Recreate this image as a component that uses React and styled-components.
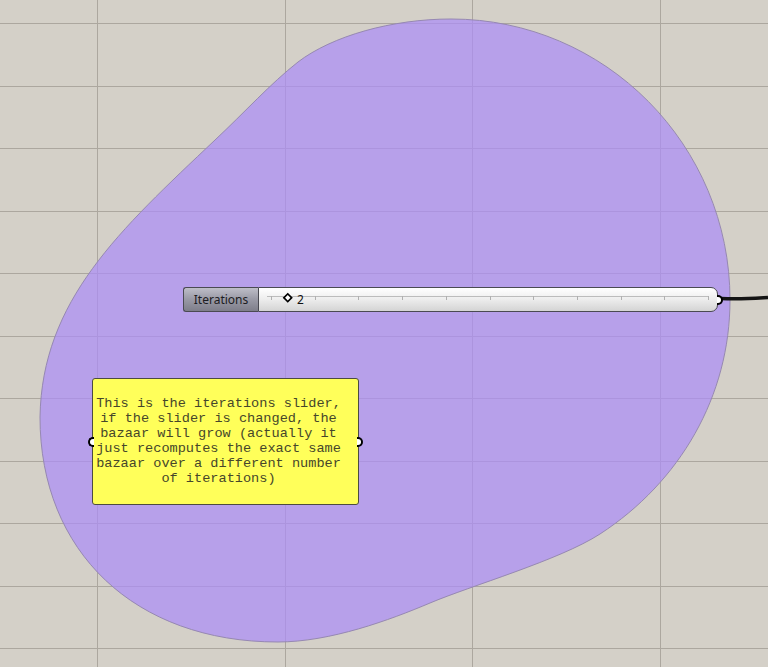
import React from "react";
import styled, { createGlobalStyle } from "styled-components";

const GlobalStyle = createGlobalStyle`
  html, body {
    margin: 0;
    padding: 0;
    background: #d4d0c8;
  }
`;

// outline of the purple group, one cubic per stretch, clockwise from the top
const groupOutline = [
  "M451,19",
  "C605,19 730,145 730,300",
  "C730,396 680,482 600,534",
  "C560,560 470,586 430,603",
  "C390,620 330,642 278,642",
  "C135,642 40,552 40,417",
  "C42,300 120,230 215,140",
  "C245,112 270,84 298,62",
  "C332,36 392,19 451,19",
  "Z",
].join(" ");

const verticalLines = [-90.5, 97, 284.5, 472, 659.5].map((x) => Math.round(x) + 0.5);
const horizontalLines = Array.from({ length: 11 }, (_, k) => Math.round(23 + 62.5 * k) + 0.5);
const ticks = Array.from({ length: 11 }, (_, k) => Math.round(12 + 43.7 * k) + 0.5);

const noteText = [
  "This is the iterations slider,",
  "if the slider is changed, the",
  "bazaar will grow (actually it",
  "just recomputes the exact same",
  "bazaar over a different number",
  "of iterations)",
];

const App = () => {
  return (
    <>
      <GlobalStyle />
      <Canvas>
        <Layer width="768" height="667" viewBox="0 0 768 667">
          {verticalLines.map((x) => (
            <line key={`v${x}`} x1={x} y1="0" x2={x} y2="667" stroke="#aca79f" shapeRendering="crispEdges" />
          ))}
          {horizontalLines.map((y) => (
            <line key={`h${y}`} x1="0" y1={y} x2="768" y2={y} stroke="#aca79f" shapeRendering="crispEdges" />
          ))}
          <path d={groupOutline} fill="rgba(172, 142, 246, 0.72)" stroke="#9688b2" strokeWidth="1" />
          {/* wire leaving the slider output */}
          <path d="M721,298.5 C740,299.5 752,298.5 768,297.5" stroke="#141414" strokeWidth="3.6" fill="none" />
        </Layer>

        <Slider>
          <SliderLabel>Iterations</SliderLabel>
          <SliderTrack>
            <Rail width="460" height="22" viewBox="0 0 460 22">
              <line x1="8" y1="8.5" x2="450" y2="8.5" stroke="#bcbcbc" />
              {ticks.map((x) => (
                <line key={x} x1={x} y1="8" x2={x} y2="12" stroke="#b0b0b0" />
              ))}
              <rect
                x="26"
                y="7"
                width="5.5"
                height="5.5"
                transform="rotate(45 28.75 9.75)"
                fill="#fff"
                stroke="#000"
                strokeWidth="1.7"
              />
            </Rail>
            <SliderValue>2</SliderValue>
          </SliderTrack>
          <Grip $side="right" />
        </Slider>

        <Note>
          <Grip $side="left" />
          {noteText.map((line) => (
            <NoteLine key={line}>{line}</NoteLine>
          ))}
          <Grip $side="right" />
        </Note>
      </Canvas>
    </>
  );
};

const Canvas = styled.div`
  position: relative;
  width: 768px;
  height: 667px;
  overflow: hidden;
  background: #d4d0c8;
`;

const Layer = styled.svg`
  position: absolute;
  left: 0;
  top: 0;
  display: block;
`;

const Slider = styled.div`
  position: absolute;
  left: 183px;
  top: 287px;
  width: 535px;
  height: 25px;
  display: flex;
  box-sizing: border-box;
`;

const SliderLabel = styled.div`
  width: 75px;
  box-sizing: border-box;
  display: flex;
  align-items: center;
  justify-content: center;
  padding-bottom: 1px;
  border: 1px solid #4a4a52;
  border-right: none;
  border-radius: 3px 0 0 3px;
  background: linear-gradient(to bottom, #bebec8 0%, #9c9ca8 45%, #7e7e8a 100%);
  font-family: "Noto Sans", "Open Sans", sans-serif;
  font-size: 12px;
  color: #1c1c22;
`;

const SliderTrack = styled.div`
  position: relative;
  flex: 1;
  box-sizing: border-box;
  border: 1px solid #4a4a52;
  border-radius: 0 7px 7px 0;
  background: linear-gradient(to bottom, #ffffff 0%, #efefef 45%, #d4d4d4 100%);
  display: flex;
  align-items: center;
`;

const Rail = styled.svg`
  position: absolute;
  left: 0;
  top: 0;
  display: block;
`;

const SliderValue = styled.span`
  position: relative;
  margin-left: 38px;
  margin-top: -1px;
  font-family: "Noto Sans", "Open Sans", sans-serif;
  font-size: 12px;
  color: #111;
`;

const Grip = styled.span`
  position: absolute;
  top: 50%;
  ${(p) => (p.$side === "left" ? "left: -5px;" : "right: -5px;")}
  width: 6px;
  height: 10px;
  margin-top: -5px;
  box-sizing: border-box;
  background: #fff;
  border: 2px solid #000;
  border-radius: ${(p) => (p.$side === "left" ? "6px 0 0 6px" : "0 6px 6px 0")};
  ${(p) => (p.$side === "left" ? "border-right: none;" : "border-left: none;")}
`;

const Note = styled.div`
  position: absolute;
  left: 92px;
  top: 378px;
  width: 267px;
  height: 127px;
  box-sizing: border-box;
  border: 1px solid #4c4c40;
  border-radius: 3px;
  background: #ffff5a;
  display: flex;
  flex-direction: column;
  align-items: center;
  justify-content: center;
  padding: 0 14px 2px 0;
`;

const NoteLine = styled.div`
  font-family: "Liberation Mono", "Courier New", monospace;
  font-size: 13.6px;
  line-height: 15px;
  color: #46462a;
  white-space: pre;
`;

export default App;
